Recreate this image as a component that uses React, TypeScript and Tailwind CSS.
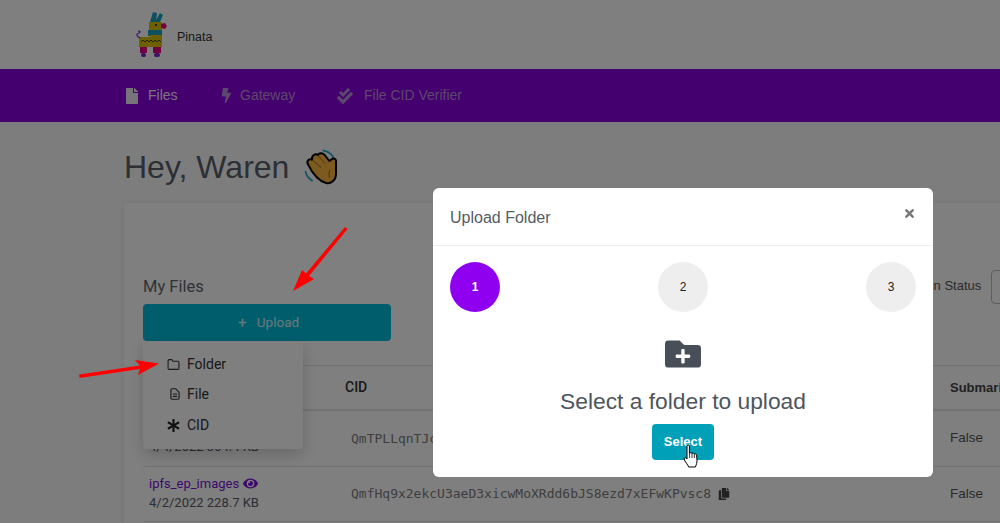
import React from 'react';
import { FaAsterisk, FaBolt, FaCheckDouble, FaCopy, FaEye, FaFile, FaFolderPlus, FaPlus, FaTimes } from 'react-icons/fa';
import { FiFolder } from 'react-icons/fi';
import { HiOutlineDocumentText } from 'react-icons/hi';

const sans = "font-['Liberation_Sans',Arial,sans-serif]";
const roboto = "font-['Roboto',sans-serif]";
const mono = "font-['DejaVu_Sans_Mono',monospace]";

const PinataLogo = () => (
  <svg viewBox="134 10 36 50" className="w-[36px] h-[50px]">
    <path d="M150 22 L153 12 L157 13 L156 22Z" fill="#17a5bd" />
    <path d="M155 22 L160 13 L163 15 L160 22Z" fill="#17a5bd" />
    <rect x="149" y="22" width="13" height="8" fill="#d8c000" />
    <circle cx="156" cy="25" r="1" fill="#111" />
    <path d="M161 24 L165 23 L167 26 L165 29 L161 28Z" fill="#e0007f" />
    <rect x="148" y="30" width="14" height="6" fill="#17a5bd" />
    <rect x="150" y="35" width="12" height="3" fill="#d8c000" />
    <rect x="139" y="37" width="23" height="10" fill="#d8c000" />
    <path d="M141 42 l2 -2 l2 2 l2 -2 l2 2 l2 -2 l2 2 l2 -2 l2 2 l2 -2 l2 2" fill="none" stroke="#222" strokeWidth="0.8" />
    <rect x="140" y="47" width="7" height="6" fill="#e0007f" />
    <rect x="153" y="47" width="8" height="6" fill="#e0007f" />
    <rect x="141" y="53" width="5" height="4" rx="2" fill="#8020d0" />
    <rect x="154" y="53" width="6" height="4" rx="2" fill="#8020d0" />
    <path d="M140 38 C136 36 136 34 139 33 C141 32 140 31 138 31" fill="none" stroke="#8020d0" strokeWidth="1.2" />
  </svg>
);

const WaveEmoji = () => (
  <svg viewBox="10 20 120 120" className="w-[40px] h-[40px]">
    <path d="M72 30 Q92 32 104 50" fill="none" stroke="#20a8c8" strokeWidth="5" />
    <path d="M20 92 Q24 112 42 122" fill="none" stroke="#20a8c8" strokeWidth="5" />
    <path
      d="M28 72 C22 62 32 54 40 58 C38 46 50 38 58 44 C62 36 72 38 78 44 L92 62 L98 58 C104 50 114 56 112 66 L112 100 C112 120 96 132 82 128 C66 124 44 106 28 72Z"
      fill="#f8b440"
      stroke="#000"
      strokeWidth="6"
      strokeLinejoin="round"
    />
    <path d="M42 60 L68 82 M58 46 L80 70" stroke="#a06c18" strokeWidth="3" fill="none" />
    <path d="M94 88 Q88 100 92 112" stroke="#a06c18" strokeWidth="3" fill="none" />
  </svg>
);

const HandCursor = () => (
  <svg viewBox="0 0 16 24" className="w-[16px] h-[24px]">
    <path
      d="M4 2 C4 0.6 6.4 0.6 6.4 2 L6.4 9.5 L6.6 9.5 C7 8.4 8.8 8.4 9 9.6 C9.5 8.7 11.1 9 11.3 10.2 C11.9 9.5 13.5 9.8 13.6 11.2 L14 16 C14.2 19 13.2 20.5 12.4 23 L5.6 23 C5 20.8 3 19 1.4 16 C0.6 14.5 1.8 13 3 13.8 L4 15 Z"
      fill="#fff"
      stroke="#000"
      strokeWidth="1"
      strokeLinejoin="round"
    />
    <path d="M6.6 9.5 L6.6 14 M9 9.6 L9 14 M11.3 10.2 L11.3 14" stroke="#000" strokeWidth="0.8" fill="none" />
  </svg>
);

const navItems = [
  { label: 'Files', icon: FaFile, box: 'w-[24px]', width: 'w-[95px]', color: 'text-[#f0e8f8]', iconSize: 'text-[16px]' },
  { label: 'Gateway', icon: FaBolt, box: 'w-[21px]', width: 'w-[118px]', color: 'text-[#b890d8]', iconSize: 'text-[15px]' },
  { label: 'File CID Verifier', icon: FaCheckDouble, box: 'w-[27px]', width: 'w-[130px]', color: 'text-[#b890d8]', iconSize: 'text-[16px]' },
];

const FileRow = ({ name, meta, cid, showCopy }: { name?: string; meta: string; cid: string; showCopy?: boolean }) => (
  <div className="grid grid-cols-[202px_605px_auto] items-center h-[55.5px] border-b border-[#e4e5e8]">
    <div className={`pl-[6px] -mt-[2px] text-[13px] leading-[19px] ${roboto} text-[#5a5a66]`}>
      <div className="flex items-center gap-[4px] h-[19px] text-[#7a14d8]">
        {name}
        {name && <FaEye className="text-[15px]" />}
      </div>
      <div>{meta}</div>
    </div>
    <div className={`pl-[6px] flex items-center gap-[7px] text-[13px] ${mono} text-[#7c7c7c]`}>
      {cid}
      {showCopy && <FaCopy className="text-[12px] text-[#444]" />}
    </div>
    <div className={`text-[13.5px] ${sans} text-[#555]`}>False</div>
  </div>
);

export default function App() {
  return (
    <div className={`relative w-[1000px] h-[523px] overflow-hidden bg-[#fafbfd] ${sans}`}>
      <header className="h-[69px] bg-white flex items-center pl-[134px] gap-[7px]">
        <PinataLogo />
        <span className="pt-[6px] text-[12.5px] text-[#333]">Pinata</span>
      </header>

      <nav className="h-[53px] bg-[#8a00df] flex items-center pl-[124px]">
        {navItems.map((item) => (
          <div key={item.label} className={`flex items-center text-[14px] whitespace-nowrap shrink-0 ${item.width} ${item.color}`}>
            <div className={`${item.box} shrink-0`}>
              <item.icon className={item.iconSize} />
            </div>
            {item.label}
          </div>
        ))}
      </nav>

      <main className="pl-[124px]">
        <div className="h-[81px] flex items-start pt-[25px] gap-[13px]">
          <h1 className="text-[32px] leading-[40px] text-[#58606a]">Hey, Waren</h1>
          <WaveEmoji />
        </div>

        <section className="w-[1100px] h-[400px] bg-white shadow-[0_0_6px_rgba(0,0,0,0.08)] pl-[19px] pt-[67px]">
          <div className="flex items-start w-[1000px]">
            <div className="w-[248px] shrink-0">
              <div className={`h-[34px] text-[16.5px] leading-[34px] ${roboto} text-[#5e6670]`}>My Files</div>
              <button className={`w-full h-[37px] rounded-[4px] bg-[#00bcd8] flex items-center justify-center gap-[10px] pl-[3px] text-[13.5px] ${roboto} text-white/80`}>
                <FaPlus className="text-[9px]" />
                Upload
              </button>
            </div>
            <div className="ml-[531px] flex items-start shrink-0">
              <span className="pt-[8px] text-[13px] leading-[16px] text-[#555] whitespace-nowrap">Pin Status</span>
              <div className="ml-[10px] w-[90px] h-[34px] border border-[#bbb] rounded-[4px] bg-white" />
            </div>
          </div>

          <div className="mt-[24px] border-t border-[#e4e5e8]">
            <div className="grid grid-cols-[202px_605px_auto] items-center h-[45px] border-b-2 border-[#e4e5e8] text-[14px]">
              <div className={`pl-[6px] ${roboto} font-medium`}>Name</div>
              <div className={`${roboto} font-medium text-[#333]`}>CID</div>
              <div className="w-[50px] overflow-hidden text-[13px] font-bold text-[#444] whitespace-nowrap">Submarined</div>
            </div>
            <FileRow meta="4/4/2022 364.4 KB" cid="QmTPLLqnTJc" />
            <FileRow name="ipfs_ep_images" meta="4/2/2022 228.7 KB" cid="QmfHq9x2ekcU3aeD3xicwMoXRdd6bJS8ezd7xEFwKPvsc8" showCopy />
          </div>
        </section>
      </main>

      {/* upload menu */}
      <div className={`absolute left-[143px] top-[341px] w-[160px] h-[108px] bg-white rounded-b-[4px] shadow-[0_6px_16px_rgba(0,0,0,0.18)] pt-[8px] pl-[24px] text-[14px] ${roboto} text-[#333]`}>
        <div className="flex items-center h-[30px]">
          <div className="w-[20px]"><FiFolder className="text-[13px]" /></div>
          Folder
        </div>
        <div className="flex items-center h-[30px]">
          <div className="w-[20px]"><HiOutlineDocumentText className="text-[14px] ml-[1px]" /></div>
          File
        </div>
        <div className="flex items-center h-[32px]">
          <div className="w-[20px]"><FaAsterisk className="text-[13px] text-[#222]" /></div>
          CID
        </div>
      </div>

      <div className="absolute inset-0 bg-black/50" />

      {/* modal */}
      <div className="absolute left-[433px] top-[188px] w-[500px] h-[289px] bg-white rounded-[6px]">
        <div className="h-[58px] border-b border-[#eeeeee] flex items-start justify-between pl-[17px] pr-[17px]">
          <span className="pt-[20px] text-[16px] leading-[19px] text-[#555c64]">Upload Folder</span>
          <FaTimes className="mt-[19px] text-[13px] text-[#777]" />
        </div>
        <div className="flex justify-between px-[17px] pt-[16px]">
          <div className="w-[50px] h-[50px] rounded-full bg-[#9000f0] flex items-center justify-center text-[12px] font-bold text-white">1</div>
          <div className="w-[50px] h-[50px] rounded-full bg-[#eeeeee] flex items-center justify-center text-[12px] text-[#222]">2</div>
          <div className="w-[50px] h-[50px] rounded-full bg-[#eeeeee] flex items-center justify-center text-[12px] text-[#222]">3</div>
        </div>
        <div className="flex flex-col items-center pt-[24px]">
          <FaFolderPlus className="text-[36px] text-[#484f58] h-[36px]" />
          <div className="mt-[13px] text-[22.8px] leading-[32px] text-[#4e555d]">Select a folder to upload</div>
          <div className="relative mt-[7px]">
            <button className="w-[62px] h-[36px] rounded-[4px] bg-[#00a0b8] flex items-start justify-center pt-[9px] text-[13px] leading-[17px] font-bold text-white">Select</button>
            <div className="absolute left-[31px] top-[20px]">
              <HandCursor />
            </div>
          </div>
        </div>
      </div>

      {/* annotation arrows */}
      <svg viewBox="0 0 1000 523" className="absolute inset-0 w-[1000px] h-[523px] pointer-events-none">
        <path d="M345 227 L347.5 229 L309 276 L314 279 L293 291 L302 270 L306 273.5 Z" fill="#ff0000" />
        <path d="M79 374.5 L140 365.5 L135 360 L159 363.5 L138 375 L140 369 L79.5 378 Z" fill="#ff0000" />
      </svg>
    </div>
  );
}
